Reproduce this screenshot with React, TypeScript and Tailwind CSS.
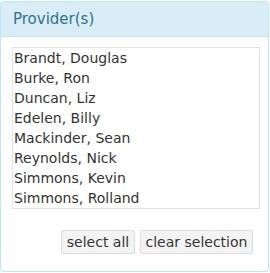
import React from "react";

const providers = [
  "Brandt, Douglas",
  "Burke, Ron",
  "Duncan, Liz",
  "Edelen, Billy",
  "Mackinder, Sean",
  "Reynolds, Nick",
  "Simmons, Kevin",
  "Simmons, Rolland",
];

export default function App() {
  return (
    <div className="h-[273px] w-[270px] bg-white pt-px font-['DejaVu_Sans',sans-serif]">
      <div className="h-[271px] w-[269px] overflow-hidden rounded-[3px] border border-[#bce8f1] bg-white">
        <div className="flex h-[35px] items-center border-b border-[#bce8f1] bg-[#d9edf7] px-3 text-[15px] text-[#31708f]">
          Provider(s)
        </div>
        <div className="px-[11px] pt-[10px]">
          <div className="h-[162px] w-[248px] border border-[#e3e3e3] bg-white">
            {providers.map((p) => (
              <div
                key={p}
                className="h-5 px-px text-[14px] leading-5 text-[#333]"
              >
                {p}
              </div>
            ))}
          </div>
          <div className="mt-[21px] flex justify-end gap-[5px] pr-[4px]">
            <button className="h-6 w-[74px] rounded-[2px] border border-[#ddd] bg-[#f3f3f3] text-[14px] leading-none text-[#333]">
              select all
            </button>
            <button className="h-6 w-[113px] rounded-[2px] border border-[#ddd] bg-[#f3f3f3] text-[14px] leading-none text-[#333]">
              clear selection
            </button>
          </div>
        </div>
      </div>
    </div>
  );
}
